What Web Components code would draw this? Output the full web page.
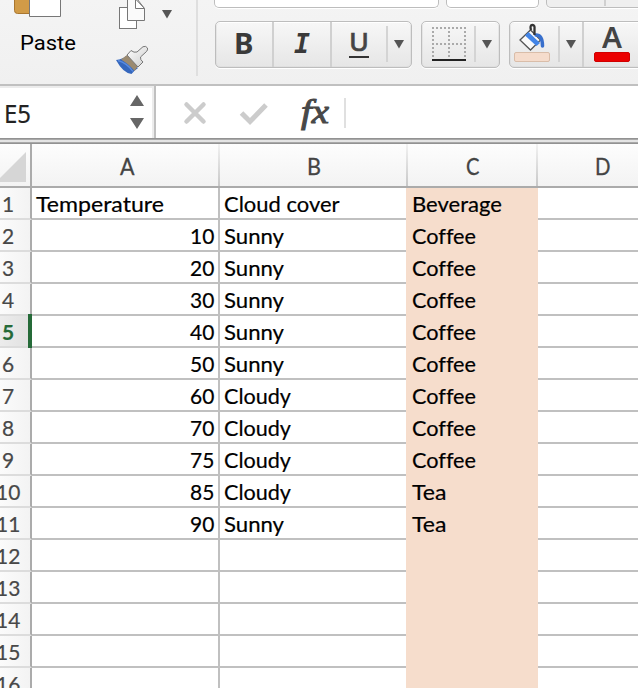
<!DOCTYPE html>
<html lang="en">
<head>
<meta charset="utf-8">
<title>Spreadsheet</title>
<style>
html,body{margin:0;width:638px;height:688px;overflow:hidden;background:#fff}
body{font-family:Lato,"Liberation Sans",sans-serif;font-variant-ligatures:none}
</style>
</head>
<body>
<sheet-app></sheet-app>
<script>
const define=(name,css,html,init)=>customElements.define(name,class extends HTMLElement{
  connectedCallback(){
    if(this.shadowRoot)return;
    const t=document.createElement('template');
    t.innerHTML=`<style>*{box-sizing:border-box}${css}</style>${typeof html==='function'?html(this):html}`;
    this.attachShadow({mode:'open'}).append(t.content.cloneNode(true));
    if(init)init(this);
  }
});

/* Text condensed or widened to a given advance width. */
define('fit-text',`:host{display:block;flex:none;white-space:nowrap}span{display:inline-block;transform-origin:0 50%;font-variant-ligatures:none}`,
  e=>`<span>${e.getAttribute('text')}</span>`,
  e=>{
    const s=e.shadowRoot.querySelector('span'),w=+e.getAttribute('w');
    e.style.width=w+'px';
    s.style.transform=`scaleX(${w/s.getBoundingClientRect().width})`;
  });

define('drop-arrow',`:host{display:block;flex:none;width:10px;height:9px}svg{display:block}`,
  `<svg width="10" height="9"><path d="M0 0H10L5 8.500Z" fill="#555"/></svg>`);

define('tool-group',`:host{display:flex;flex:none;height:47px;border:1.5px solid #bdbdbd;border-radius:5px;background:linear-gradient(#f7f7f7,#e6e6e6);box-shadow:0 1px 0 #fff,inset 0 1px 0 #fff,inset 0 0 0 1px #dadada88}`,`<slot></slot>`);

define('tool-cell',`:host{display:flex;flex:none;justify-content:center;height:100%}
:host([full]){border-right:2px solid #d0d0d0}
:host([short]){border-right:2px solid #d4d4d4;height:36px;margin-top:4px}`,`<slot></slot>`);

define('clipboard-tools',`:host{display:flex;flex:none;width:198px;height:76px;border-right:2px solid #dfdfdf;margin-right:16px}
.p{width:96px;display:flex;flex-direction:column;align-items:center}
.p svg,.i svg{display:block}
.p fit-text{font:21px/28px Roboto,sans-serif;color:#000;margin-top:12px}
.i{width:66px;padding-left:19px}
.a{padding-top:10px}`,
`<div class="p"><svg width="96" height="17"><rect x="14.500" y="-10" width="40" height="23.500" rx="3" fill="#d19b47" stroke="#a9762f"/><path d="M29.500 -4H60.500V16.500H29.500Z" fill="#fff" stroke="#777"/></svg><fit-text text="Paste" w="56"></fit-text></div>
<div class="i"><svg width="40" height="76">
<rect x="4.500" y="7.500" width="17" height="21" fill="#fff" stroke="#777"/>
<path d="M12.500-3H20.500L29.500 8.500V20.500H12.500Z" fill="#fafafa" stroke="#777"/><path d="M20.500-1V8.500H29.500Z" fill="#fff" stroke="#777"/>
<defs><linearGradient id="h" x1="0" y1="0" x2="1" y2="1"><stop offset="0" stop-color="#fff"/><stop offset="1" stop-color="#ccc"/></linearGradient></defs>
<path d="M1 60Q8 59 11 56L23 68Q20 70 16.500 74Q8 73 1 60Z" fill="#3567bd"/>
<path d="M6 59.500L12 55L23 66L19.500 71Q15 65 6 59.500Z" fill="#9b8a70"/>
<path d="M3 60.500Q12 63 18 71.500" fill="none" stroke="#5a8ce0" stroke-width="1.300"/>
<path d="M12 55L16 50.500Q19 53 22 52L28 46.700Q31 45.500 32.500 48Q33 50 31.500 51.500L25.500 57Q25 60 28 62L23 67Z" fill="url(#h)" stroke="#777"/>
</svg></div><drop-arrow class="a"></drop-arrow>`);

define('ribbon-bar',`:host{display:flex;height:86px;background:linear-gradient(#f4f4f4,#f0f0f0);border-bottom:2px solid #c0c0c0;overflow:hidden}
.r{display:flex;flex:none;flex-direction:column;width:460px}
.row{display:flex}
.top{height:8px;margin-bottom:13px;gap:7px}
.box{flex:none;height:8px;border:1.5px solid #bdbdbd;border-top:0;border-radius:0 0 5px 5px;background:#fff;box-shadow:0 1px 0 #fff}
.g{background:#efefef}.g i{display:block;width:2px;height:6px;background:#d0d0d0;margin-left:57px}
.btns{gap:9px;padding-left:.5px}
.b{font:bold 28px/42px "Noto Sans",sans-serif;color:#3a3a3a}
.it{font:italic bold 27px/44px "DejaVu Sans Mono",monospace;color:#3a3a3a}
.u{font:500 26px/31px "Noto Sans",sans-serif;color:#444;height:32px;border-bottom:2px solid #333;-webkit-text-stroke:.5px #444}
drop-arrow{margin-top:18px}
svg{display:block}
.font{display:flex;flex-direction:column;align-items:center}
.font fit-text{font:600 28px/30px "Noto Sans",sans-serif;color:#444;height:30px}
.bar{width:36px;height:10px;border-radius:2px;background:#eb0000;border:1px solid #d00000}`,
`<clipboard-tools></clipboard-tools>
<div class="r"><div class="row top"><div class="box" style="width:225px"></div><div class="box" style="width:93px"></div><div class="box g" style="width:120px"><i></i></div></div>
<div class="row btns">
<tool-group style="width:197px"><tool-cell full style="width:58px"><fit-text class="b" text="B" w="19.5"></fit-text></tool-cell><tool-cell full style="width:58px"><fit-text class="it" text="I" w="16"></fit-text></tool-cell><tool-cell short style="width:56px"><fit-text class="u" text="U" w="20"></fit-text></tool-cell><tool-cell style="width:22px"><drop-arrow></drop-arrow></tool-cell></tool-group>
<tool-group style="width:79px"><tool-cell short style="width:54px"><svg width="36" height="36" style="margin-left:3px"><g fill="none" stroke="#aaa" stroke-width="2" stroke-dasharray="2 2"><path d="M1 2H35M1 18H35M2 5V32M18 5V32M34 5V32"/></g><path d="M1 34H35" stroke="#222" stroke-width="2"/></svg></tool-cell><tool-cell style="width:22px"><drop-arrow></drop-arrow></tool-cell></tool-group>
<tool-group style="width:180px"><tool-cell short style="width:50px"><svg width="38" height="44" style="margin-top:-5px;margin-left:-3px;flex:none">
<path d="M7 19L17.500 9L27.500 19L17.500 29Z" fill="#fafafa" stroke="#555" stroke-width="1.300"/>
<path d="M12 14.500L15.500 11L27 22L23.500 25Z" fill="#4385e7"/>
<path d="M23 14Q29.500 14 29.500 25" fill="none" stroke="#386fcc" stroke-width="3.500" stroke-linecap="round"/>
<path d="M18 9Q16.500 4 19.500 4Q22 4 21.500 8V14" fill="none" stroke="#333" stroke-width="2.300"/>
<rect x="1.500" y="31.500" width="35" height="9" rx="1.500" fill="#f5dccc" stroke="#d9bda9"/></svg></tool-cell><tool-cell full style="width:24px"><drop-arrow></drop-arrow></tool-cell><tool-cell style="width:57px"><div class="font"><fit-text text="A" w="20"></fit-text><div class="bar"></div></div></tool-cell></tool-group>
</div></div>`);

define('formula-bar',`:host{display:flex;flex-direction:column;height:58px;background:#fff}
.w{display:flex;height:52px}
.l{height:6px;background:linear-gradient(#929292 0 1px,#a8a8a8 1px 2px,#e4e4e4 2px 4px,#a8a8a8 4px 5px,#929292 5px)}
.n{width:156px;height:52px;flex:none;display:flex;border-right:2px solid #c0c0c0;box-shadow:inset 0 2px #ececec,inset -2px 0 #ececec;padding-left:4px}
.n fit-text{font:24.500px/52px "Noto Sans",sans-serif;color:#222;padding-top:2px;-webkit-text-stroke:.2px #222}
svg{display:block;flex:none}
.n svg{margin-left:99px}
.fx{font:italic 34px/52px "Liberation Serif",serif;color:#484848;margin-left:5px;-webkit-text-stroke:1px #484848}
.v{width:2px;height:30px;background:#e0e0e0;margin:12px 0 0 15px}`,
`<div class="w"><div class="n"><fit-text text="E5" w="27"></fit-text><svg width="14" height="52"><path d="M0 20L7 9L14 20ZM0 32H14L7 43Z" fill="#666"/></svg></div>
<svg width="140" height="52"><path d="M30.500 18.500L47.500 35.500M47.500 18.500L30.500 35.500" stroke="#ccc" stroke-width="4.500" stroke-linecap="round"/><path d="M85.500 27L94 35.500L110 19" fill="none" stroke="#ccc" stroke-width="5"/></svg>
<fit-text class="fx" text="fx" w="28"></fit-text><div class="v"></div></div><div class="l"></div>`);

define('column-headers',`:host{display:grid;grid-template-columns:30px 2px 186px 2px 186px 2px 128px 2px 1fr;height:44px;border-bottom:2px solid #ababab;background:linear-gradient(#fdfdfd,#f3f3f3);overflow:hidden}
i{background:linear-gradient(#f2f2f2,#c6c6c6)}
.s{background:#ababab}
div{display:flex;justify-content:center;padding-top:2px;padding-left:1px;font:22.300px/42px Lato,sans-serif;color:#444;-webkit-text-stroke:.3px #444}
.s+div{padding-left:4px}
div:last-child{width:129px}
svg{display:block}`,
`<svg width="30" height="42"><path d="M26 8V38H-4Z" fill="#d6d6d6"/></svg><i class="s"></i><div><fit-text text="A" w="14.5"></fit-text></div><i></i><div><fit-text text="B" w="14"></fit-text></div><i></i><div><fit-text text="C" w="13.5"></fit-text></div><i></i><div><fit-text text="D" w="15.500"></fit-text></div>`);

define('sheet-row',`:host{display:grid;grid-template-columns:32px 188px 186px 132px 1fr;height:32px;font:21.600px/32px Lato,sans-serif;color:#000;-webkit-text-stroke:.2px}
div{height:32px;border-bottom:2px solid #c0c0c0;display:flex}
.h{border-right:2px solid #ababab;border-bottom-color:#dcdcdc;background:linear-gradient(90deg,#fbfbfb,#f3f3f3);color:#484848;position:relative}
.h fit-text{margin-left:2px}.h.two fit-text{margin-left:-4px}
.a{border-right:2px solid #c0c0c0}.a.num{justify-content:flex-end;padding-right:4px}
.a{padding-left:4px}.b{padding-left:4px}.c{padding-left:6px;background:#f6ddcc;border-color:#f6ddcc}
:host([active]) .h{background:linear-gradient(90deg,#ececec,#e1e1e1);color:#256a38;font-weight:bold}
:host([active]) .h::after{content:"";position:absolute;right:-2px;top:-2px;width:4px;height:34px;background:#256a38}`,
e=>{
  const W={Temperature:128,'Cloud cover':115.5,Beverage:90,Sunny:60,Cloudy:67,Coffee:64,Tea:34.5};
  const f=t=>t?`<fit-text text="${t}" w="${W[t]||12.16*t.length}"></fit-text>`:'';
  const g=k=>e.getAttribute(k)||'',n=g('n'),a=g('a');
  return `<div class="h ${n.length>1?'two':''}">${f(n)}</div><div class="a ${+a?'num':''}">${f(a)}</div><div class="b">${f(g('b'))}</div><div class="c">${f(g('c'))}</div><div></div>`;
});

const DATA=[['Temperature','Cloud cover','Beverage'],[10,'Sunny','Coffee'],[20,'Sunny','Coffee'],[30,'Sunny','Coffee'],[40,'Sunny','Coffee'],[50,'Sunny','Coffee'],[60,'Cloudy','Coffee'],[70,'Cloudy','Coffee'],[75,'Cloudy','Coffee'],[85,'Cloudy','Tea'],[90,'Sunny','Tea'],[],[],[],[],[]];
define('sheet-grid',`:host{display:flex;flex-direction:column}`,
  ()=>DATA.map(([a='',b='',c=''],i)=>`<sheet-row n="${i+1}" a="${a}" b="${b}" c="${c}" ${i===4?'active':''}></sheet-row>`).join(''));

define('sheet-app',`:host{display:flex;flex-direction:column;width:638px;height:688px;overflow:hidden;background:#fff}ribbon-bar,formula-bar,column-headers,sheet-grid{flex:none}`,
  `<ribbon-bar></ribbon-bar><formula-bar></formula-bar><column-headers></column-headers><sheet-grid></sheet-grid>`);
</script>
</body>
</html>
